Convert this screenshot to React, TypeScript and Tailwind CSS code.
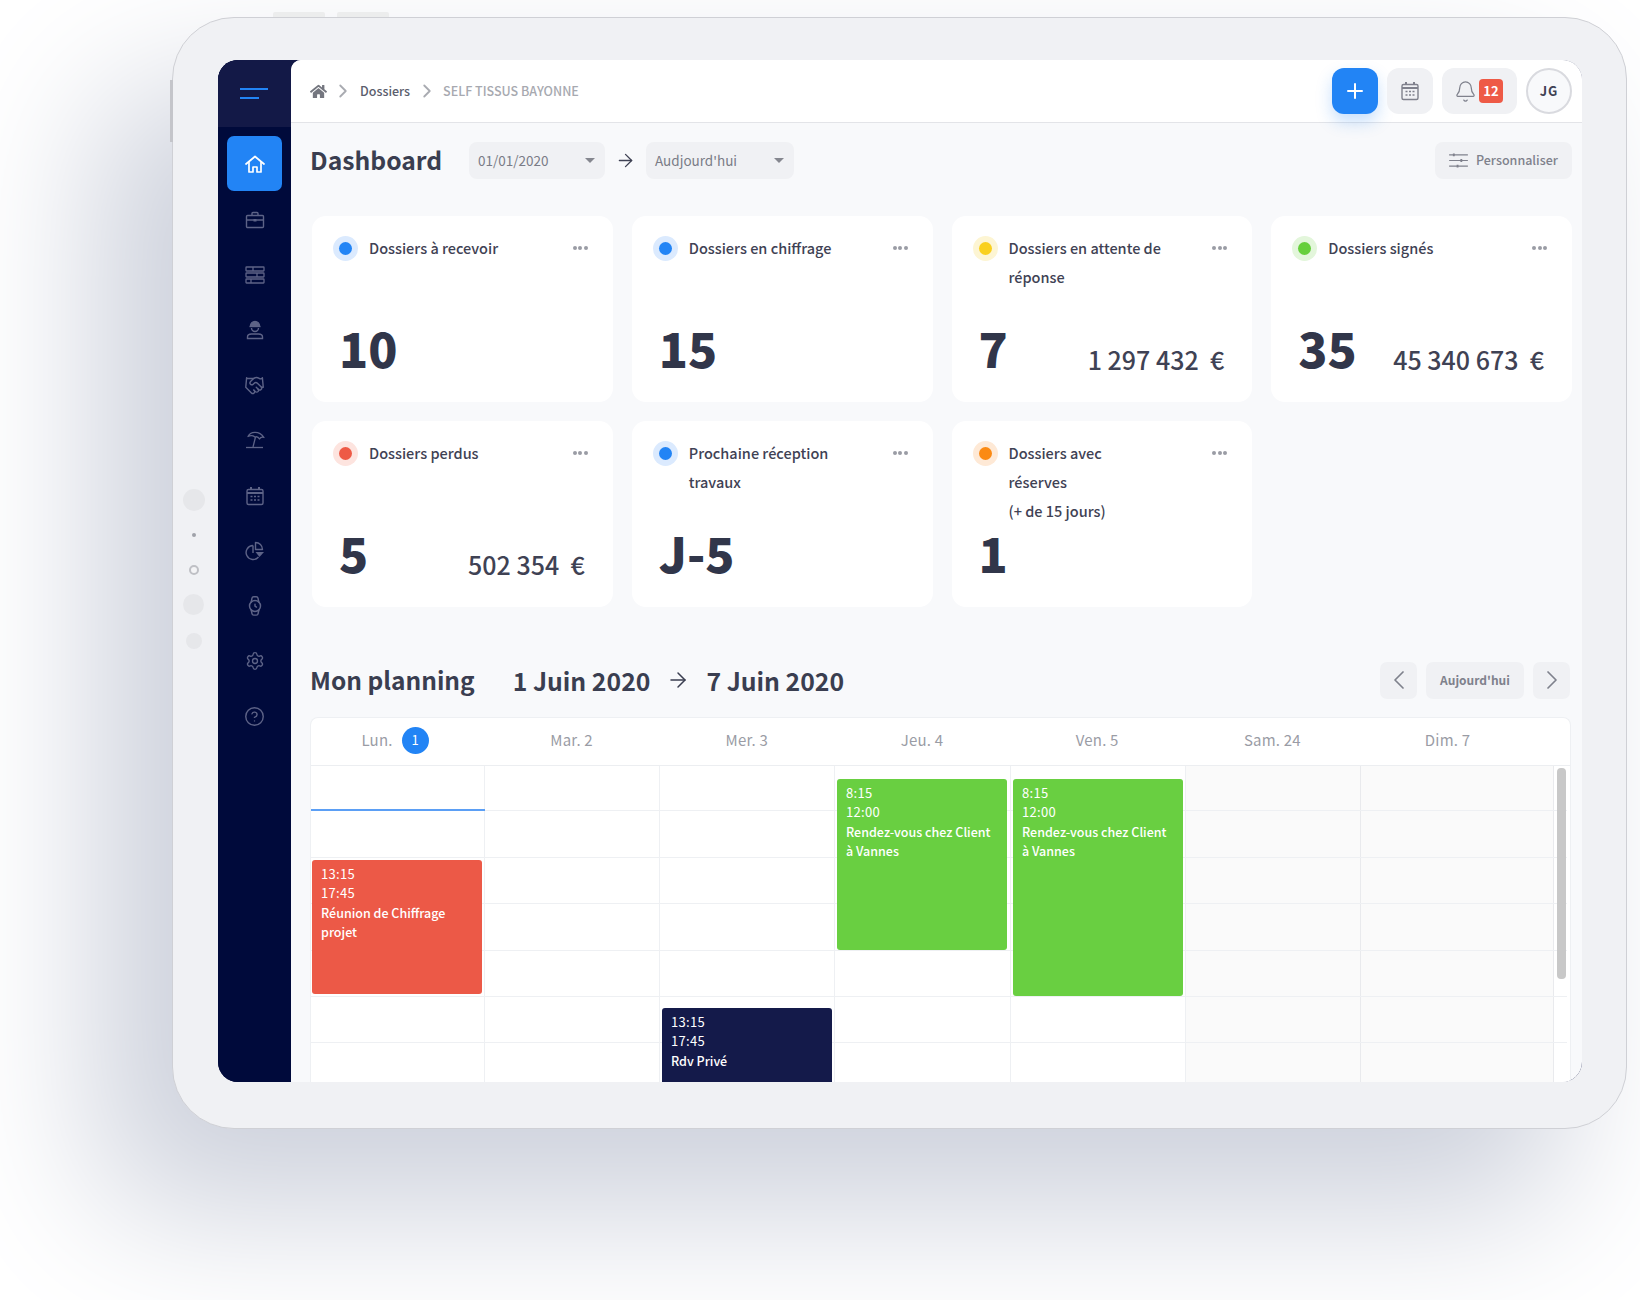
import React from "react";
import { Bell, ChevronLeft, ChevronRight, Plus, ArrowRight, Handshake, Watch, Settings, CircleHelp } from "lucide-react";
import { FaHome } from "react-icons/fa";

const font = { fontFamily: '"Noto Sans CJK SC", "Noto Sans", sans-serif' };

const iconClass = "w-[20px] h-[20px] text-[#5d6387]";

const HomeIcon = () => (
  <svg viewBox="0 0 20 18" className="w-[20px] h-[18px] text-white" fill="none" stroke="currentColor" strokeWidth="1.700" strokeLinejoin="round" strokeLinecap="round">
    <path d="M1 9l9-7.500L19 9" />
    <path d="M4 7.500V17h4v-5h4v5h4V7.500" />
  </svg>
);

const BriefcaseIcon = () => (
  <svg viewBox="0 0 20 20" className={iconClass} fill="none" stroke="currentColor" strokeWidth="1.400">
    <rect x="1.500" y="5.500" width="17" height="12" rx="1" />
    <path d="M7 5.500v-2a1 1 0 0 1 1-1h4a1 1 0 0 1 1 1v2" />
    <path d="M1.500 10h17" />
    <rect x="8.500" y="9" width="3" height="2.500" fill="currentColor" stroke="none" />
  </svg>
);

const RowsIcon = () => (
  <svg viewBox="0 0 20 18" className={iconClass} fill="none" stroke="currentColor" strokeWidth="1.300">
    <rect x="1" y="1" width="18" height="4" rx="0.500" />
    <rect x="1" y="7" width="18" height="4" rx="0.500" />
    <rect x="1" y="13" width="18" height="4" rx="0.500" />
    <path d="M8 1v4M12 7v4M6 13v4" />
  </svg>
);

const WorkerIcon = () => (
  <svg viewBox="0 0 20 20" className={iconClass} fill="none" stroke="currentColor" strokeWidth="1.400">
    <path d="M5.500 6a4.500 4.500 0 0 1 9 0z" fill="currentColor" />
    <path d="M4.500 6.500h11" />
    <path d="M6.500 8a3.500 3.500 0 0 0 7 0" />
    <path d="M2.500 18.500v-1.500c0-2 2-3 4-3h7c2 0 4 1 4 3v1.500z" />
  </svg>
);

const BeachIcon = () => (
  <svg viewBox="0 0 20 20" className={iconClass} fill="none" stroke="currentColor" strokeWidth="1.300" strokeLinejoin="round">
    <path d="M3 6.500C5 1.500 14 0 19 7.500c-2-.8-3.500-.3-4.500 1.500-1-1.800-3-2.500-4.500-2C8 5.500 5 5.500 3 6.500z" />
    <path d="M10.500 7L8 17" />
    <path d="M1 17.500h17" />
  </svg>
);

const CalendarIcon = ({ className }: { className: string }) => (
  <svg viewBox="0 0 20 20" className={className} fill="none" stroke="currentColor" strokeWidth="1.400">
    <rect x="2" y="3.500" width="16" height="15" rx="1.500" />
    <path d="M2 7h16" strokeWidth="2" />
    <path d="M6 1v3M14 1v3" strokeWidth="2" />
    <path d="M5.500 10.500h2M9 10.500h2M12.500 10.500h2M5.500 14h2M9 14h2M12.500 14h2" strokeWidth="1.600" />
  </svg>
);

const PieIcon = () => (
  <svg viewBox="0 0 20 20" className={iconClass} fill="none" stroke="currentColor" strokeWidth="1.400" strokeLinejoin="round">
    <path d="M8 4.500a7 7 0 1 0 5.500 11.500" />
    <path d="M8 4.500V12" />
    <path d="M10.500 1.500a7 7 0 0 1 7 7h-7z" />
    <path d="M10.500 11h8.500l-4.500 5z" fill="currentColor" stroke="none" />
  </svg>
);

const SlidersIcon = () => (
  <svg viewBox="0 0 20 16" className="w-[19px] h-[15px] text-[#7f818c]" fill="none" stroke="currentColor" strokeWidth="1.300">
    <path d="M0 2h20M0 8h20M0 14h20" />
    <path d="M5 0.500v3M13 6.500v3M9 12.500v3" strokeWidth="2" />
  </svg>
);

const navIcons = [
  <BriefcaseIcon />,
  <RowsIcon />,
  <WorkerIcon />,
  <Handshake className="w-[21px] h-[21px] text-[#5d6387]" strokeWidth={1.600} />,
  <BeachIcon />,
  <CalendarIcon className={iconClass} />,
  <PieIcon />,
  <Watch className="w-[22px] h-[22px] text-[#5d6387]" strokeWidth={1.600} />,
  <Settings className="w-[20px] h-[20px] text-[#5d6387]" strokeWidth={1.600} />,
  <CircleHelp className="w-[21px] h-[21px] text-[#5d6387]" strokeWidth={1.600} />,
];

type CardProps = {
  ring: string;
  dot: string;
  title: string[];
  value: string;
  amount?: string;
};

const cards: CardProps[] = [
  { ring: "bg-[#dbeafe]", dot: "bg-[#2284f5]", title: ["Dossiers à recevoir"], value: "10" },
  { ring: "bg-[#dbeafe]", dot: "bg-[#2284f5]", title: ["Dossiers en chiffrage"], value: "15" },
  { ring: "bg-[#fdf5d3]", dot: "bg-[#f9d01f]", title: ["Dossiers en attente de", "réponse"], value: "7", amount: "1 297 432  €" },
  { ring: "bg-[#e3f6db]", dot: "bg-[#66cf3c]", title: ["Dossiers signés"], value: "35", amount: "45 340 673  €" },
  { ring: "bg-[#fde4df]", dot: "bg-[#ee5a46]", title: ["Dossiers perdus"], value: "5", amount: "502 354  €" },
  { ring: "bg-[#dbeafe]", dot: "bg-[#2284f5]", title: ["Prochaine réception", "travaux"], value: "J-5" },
  { ring: "bg-[#fee9d6]", dot: "bg-[#fb8a13]", title: ["Dossiers avec", "réserves", "(+ de 15 jours)"], value: "1" },
];

function Card({ ring, dot, title, value, amount }: CardProps) {
  return (
    <div className="h-[186px] bg-white rounded-[14px] pl-[21px] pr-[28px] pt-[20px] pb-[27px] flex flex-col justify-between">
      <div className="flex items-start h-[80px]">
        <div className={`w-[25px] h-[25px] rounded-full flex items-center justify-center shrink-0 ${ring}`}>
          <div className={`w-[13px] h-[13px] rounded-full ${dot}`} />
        </div>
        <div className="ml-[11px] flex-1 text-[14.500px] leading-[29px] font-medium text-[#3f4254] -mt-[3px]">
          {title.map((line) => (
            <div key={line}>{line}</div>
          ))}
        </div>
        <div className="flex gap-[1.500px] mt-[10px] -mr-[3px]">
          <span className="w-[4px] h-[4px] rounded-full bg-[#9a9ca5]" />
          <span className="w-[4px] h-[4px] rounded-full bg-[#9a9ca5]" />
          <span className="w-[4px] h-[4px] rounded-full bg-[#9a9ca5]" />
        </div>
      </div>
      <div className="flex items-end justify-between pl-[6px]">
        <div className="text-[48px] leading-[56px] font-black text-[#31364a]">{value}</div>
        <div className="text-[25px] leading-[36px] font-medium text-[#3f4254] whitespace-pre -mb-[2px]">{amount}</div>
      </div>
    </div>
  );
}

function Select({ label, width }: { label: string; width: string }) {
  return (
    <div className={`h-[37px] rounded-[8px] bg-[#f0f1f4] pl-[9px] pr-[10px] flex items-center justify-between text-[13.500px] text-[#7a7c87] ${width}`}>
      <span>{label}</span>
      <span className="w-0 h-0 border-x-[5px] border-x-transparent border-t-[5px] border-t-[#85878f]" />
    </div>
  );
}

const days = ["Mar. 2", "Mer. 3", "Jeu. 4", "Ven. 5", "Sam. 24", "Dim. 7"];

function Event({ times, title, color, className }: { times: string[]; title: string[]; color: string; className: string }) {
  return (
    <div className={`absolute rounded-[3px] pl-[9px] pt-[5px] text-white text-[13px] tracking-[0.3px] leading-[18.500px] overflow-hidden ${color} ${className}`}>
      {times.map((t) => (
        <div key={t}>{t}</div>
      ))}
      <div className="mt-[2px] text-[12.500px] tracking-normal font-medium">
        {title.map((t) => (
          <div key={t}>{t}</div>
        ))}
      </div>
    </div>
  );
}

function Calendar() {
  return (
    <div className="mt-[17px] ml-[19px] mr-[11px] flex-1 min-h-0 bg-white rounded-t-[8px] border border-b-0 border-[#eef0f3] flex flex-col overflow-hidden">
      <div className="h-[48px] shrink-0 flex items-center pb-[3px] border-b border-[#eceef1] text-[15px] tracking-[0.2px] text-[#9a9ca5]">
        <div className="w-[173px] flex items-center justify-center gap-[9px] pr-[5px]">
          Lun.
          <span className="w-[27px] h-[27px] rounded-full bg-[#2284f5] text-white text-[13px] flex items-center justify-center">1</span>
        </div>
        {days.map((d) => (
          <div key={d} className="w-[175.200px] text-center">
            {d}
          </div>
        ))}
      </div>
      <div className="relative flex-1 min-h-0 overflow-hidden">
        {/* background columns */}
        <div className="absolute inset-0 flex">
          <div className="w-[174px] border-r border-[#eef0f3]" />
          <div className="w-[175.200px] border-r border-[#eef0f3]" />
          <div className="w-[175.200px] border-r border-[#eef0f3]" />
          <div className="w-[175.200px] border-r border-[#eef0f3]" />
          <div className="w-[175.200px] border-r border-[#eef0f3]" />
          <div className="w-[175.200px] bg-[#fafafa] border-r border-[#e9eaed]" />
          <div className="w-[193px] bg-[#fafafa] border-r border-[#e9eaed]" />
        </div>
        {/* rows */}
        <div className="absolute left-0 right-[3px] -top-[1px] flex flex-col">
          {[0, 1, 2, 3, 4, 5, 6].map((i) => (
            <div key={i} className="h-[46.400px] border-b border-[#eef0f3]" />
          ))}
        </div>
        <div className="absolute left-0 top-[43px] w-[174px] h-[2px] bg-[#5b9ff5]" />
        <Event color="bg-[#ec5947]" className="left-[1px] top-[94px] w-[170px] h-[134px]" times={["13:15", "17:45"]} title={["Réunion de Chiffrage", "projet"]} />
        <Event color="bg-[#69cf41]" className="left-[526px] top-[13px] w-[170px] h-[171px]" times={["8:15", "12:00"]} title={["Rendez-vous chez Client", "à Vannes"]} />
        <Event color="bg-[#69cf41]" className="left-[702px] top-[13px] w-[170px] h-[217px]" times={["8:15", "12:00"]} title={["Rendez-vous chez Client", "à Vannes"]} />
        <Event color="bg-[#141a4a]" className="left-[351px] top-[242px] w-[170px] h-[90px]" times={["13:15", "17:45"]} title={["Rdv Privé"]} />
        <div className="absolute right-[4px] top-[2px] w-[9px] h-[211px] rounded-[4px] bg-[#c8c8c8]" />
      </div>
    </div>
  );
}

export default function App() {
  return (
    <div style={font} className="w-[1640px] h-[1300px] bg-white overflow-hidden pl-[172px] pt-[17px]">
      <div className="relative w-[1455px] h-[1112px] rounded-[62px] bg-[#f0f1f4] border border-[#cfd0d5] shadow-[-70px_77px_150px_5px_#cdd1dc] pl-[45px] pr-[44px] pt-[42px] pb-[46px]">
        {/* bezel buttons */}
        <div className="absolute left-[100px] -top-[6px] w-[52px] h-[5px] rounded-t-[2px] bg-[#eceded]" />
        <div className="absolute left-[164px] -top-[6px] w-[52px] h-[5px] rounded-t-[2px] bg-[#eceded]" />
        <div className="absolute -left-[3px] top-[62px] w-[3px] h-[62px] bg-[#c4c5ca]" />
        <div className="absolute left-[10px] top-[471px] w-[22px] h-[22px] rounded-full bg-[#e6e7ea]" />
        <div className="absolute left-[19px] top-[515px] w-[4px] h-[4px] rounded-full bg-[#a0a2a9]" />
        <div className="absolute left-[16px] top-[547px] w-[10px] h-[10px] rounded-full bg-[#f4f4f6] border-2 border-[#bfc0c5]" />
        <div className="absolute left-[10px] top-[576px] w-[21px] h-[21px] rounded-full bg-[#e6e7ea]" />
        <div className="absolute left-[13px] top-[615px] w-[16px] h-[16px] rounded-full bg-[#e6e7ea]" />

        {/* screen */}
        <div className="w-full h-full rounded-[20px] overflow-hidden flex bg-[#131947]">
          <aside className="w-[73px] shrink-0 bg-[#000a3b] flex flex-col">
            <div className="h-[67px] shrink-0 bg-[#131947] flex flex-col justify-center gap-[7px] pl-[22px]">
              <span className="w-[28px] h-[2px] bg-[#2284f5]" />
              <span className="w-[19px] h-[2px] bg-[#2284f5]" />
            </div>
            <div className="mt-[9px] mx-[9px] h-[55px] rounded-[7px] bg-[#2284f5] flex items-center justify-center">
              <HomeIcon />
            </div>
            <div className="mt-[1px] flex flex-col items-center">
              {navIcons.map((icon, i) => (
                <div key={i} className="h-[55.200px] w-full flex items-center justify-center">
                  {icon}
                </div>
              ))}
            </div>
          </aside>
          <main className="flex-1 min-w-0 flex flex-col rounded-tl-[10px] overflow-hidden bg-[#f8f9fb]">
            <header className="h-[63px] shrink-0 bg-white border-b border-[#e3e4e8] flex items-center pl-[19px] pr-[10px]">
              <FaHome className="w-[17px] h-[17px] text-[#74767f]" />
              <ChevronRight className="ml-[5px] w-[22px] h-[22px] text-[#a9abb1]" strokeWidth={2} />
              <span className="ml-[6px] text-[12.500px] font-medium text-[#5b5e6d]">Dossiers</span>
              <ChevronRight className="ml-[6px] w-[22px] h-[22px] text-[#a9abb1]" strokeWidth={2} />
              <span className="ml-[5px] text-[12.500px] font-medium text-[#a7a9b0]">SELF TISSUS BAYONNE</span>
              <div className="ml-auto flex items-center">
                <div className="w-[46px] h-[46px] rounded-[12px] bg-[#2284f5] shadow-[0_8px_16px_#2284f540] flex items-center justify-center">
                  <Plus className="w-[24px] h-[24px] text-white" strokeWidth={2} />
                </div>
                <div className="ml-[9px] w-[46px] h-[46px] rounded-[12px] bg-[#f0f1f4] flex items-center justify-center">
                  <CalendarIcon className="w-[20px] h-[20px] text-[#7f818c]" />
                </div>
                <div className="ml-[9px] w-[75px] h-[46px] rounded-[12px] bg-[#f0f1f4] flex items-center pl-[12px]">
                  <Bell className="w-[23px] h-[23px] text-[#7f818c]" strokeWidth={1.300} />
                  <span className="ml-[2px] w-[24px] h-[24px] rounded-[4px] bg-[#ee5a46] text-white text-[13px] font-bold flex items-center justify-center">12</span>
                </div>
                <div className="ml-[9px] w-[46px] h-[46px] rounded-full bg-[#f8f9fb] border-2 border-[#d9dadf] flex items-center justify-center text-[13px] font-bold tracking-[1px] text-[#3f4254]">JG</div>
              </div>
            </header>

            <div className="h-[37px] mt-[19px] shrink-0 flex items-center pl-[19px] pr-[10px]">
              <h1 className="w-[130px] text-[24.700px] font-bold text-[#3a3e50] leading-none whitespace-nowrap -mt-[2px]">Dashboard</h1>
              <div className="ml-[29px]">
                <Select label="01/01/2020" width="w-[136px]" />
              </div>
              <ArrowRight className="mx-[10px] w-[21px] h-[21px] text-[#3f4254]" strokeWidth={1.500} />
              <Select label="Audjourd'hui" width="w-[148px]" />
              <div className="ml-auto h-[37px] w-[137px] rounded-[8px] bg-[#f0f1f4] flex items-center pl-[14px] gap-[8px] text-[12.500px] font-medium text-[#7f818c]">
                <SlidersIcon />
                Personnaliser
              </div>
            </div>

            <div className="mt-[37px] ml-[21px] mr-[10px] shrink-0 grid grid-cols-4 gap-[19px]">
              {cards.map((c) => (
                <Card key={c.value} {...c} />
              ))}
            </div>

            <div className="mt-[54px] h-[38px] shrink-0 flex items-center pl-[19px] pr-[12px] text-[#3a3e50]">
              <h2 className="text-[24.500px] font-semibold leading-none">Mon planning</h2>
              <span className="ml-[38px] text-[24.800px] font-semibold leading-none">1 Juin 2020</span>
              <ArrowRight className="mx-[16px] w-[24px] h-[24px]" strokeWidth={1.500} />
              <span className="text-[24.800px] font-semibold leading-none">7 Juin 2020</span>
              <div className="ml-auto flex gap-[9px]">
                <div className="w-[37px] h-[37px] rounded-[7px] bg-[#f0f1f4] flex items-center justify-center">
                  <ChevronLeft className="w-[32px] h-[32px] text-[#7f818c]" strokeWidth={1.300} />
                </div>
                <div className="w-[98px] h-[37px] rounded-[7px] bg-[#f0f1f4] flex items-center justify-center text-[12px] font-bold text-[#7f818c]">Aujourd'hui</div>
                <div className="w-[37px] h-[37px] rounded-[7px] bg-[#f0f1f4] flex items-center justify-center">
                  <ChevronRight className="w-[32px] h-[32px] text-[#7f818c]" strokeWidth={1.300} />
                </div>
              </div>
            </div>

            <div className="h-[1px] shrink-0" />
            <Calendar />
          </main>
        </div>
      </div>
    </div>
  );
}
